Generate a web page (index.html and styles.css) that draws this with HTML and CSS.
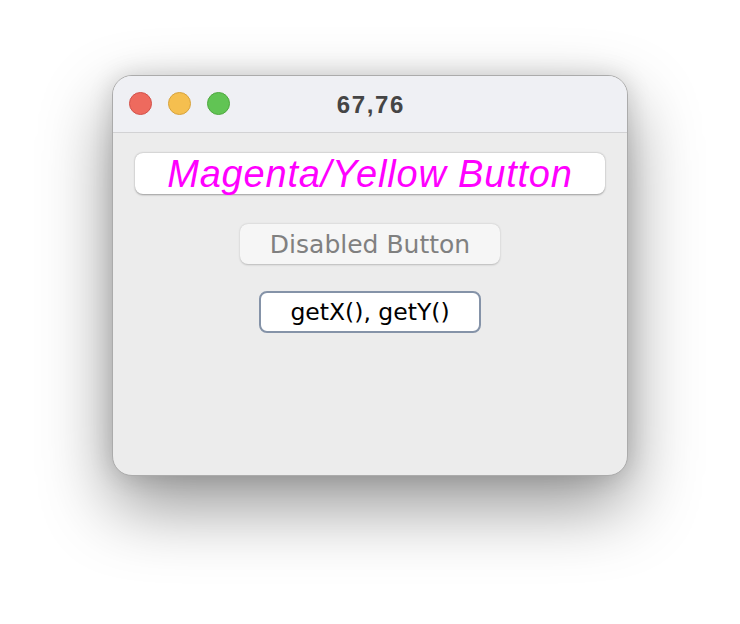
FILE: index.html
```html
<!DOCTYPE html>
<html>
<head>
<meta charset="utf-8">
<link rel="stylesheet" href="styles.css">
</head>
<body>
<div class="window">
  <div class="titlebar">
    <div class="lights">
      <span class="light red"></span>
      <span class="light yellow"></span>
      <span class="light green"></span>
    </div>
    <div class="title">67,76</div>
  </div>
  <div class="content">
    <div class="btn magenta">Magenta/Yellow Button</div>
    <div class="btn disabled">Disabled Button</div>
    <div class="btn focused">getX(), getY()</div>
  </div>
</div>
</body>
</html>
```
FILE: styles.css
```css
html, body {
  margin: 0;
  padding: 0;
  background: #ffffff;
}
body {
  width: 740px;
  height: 624px;
  overflow: hidden;
}
.window {
  margin: 75px 0 0 112px;
  width: 516px;
  height: 401px;
  box-sizing: border-box;
  border-radius: 20px;
  background: #ececec;
  border: 1px solid #ababab;
  box-shadow: 0 30px 70px rgba(0,0,0,0.42), 0 0 24px rgba(0,0,0,0.14);
  overflow: hidden;
  display: flex;
  flex-direction: column;
}
.titlebar {
  position: relative;
  height: 56px;
  flex: none;
  background: #eff0f4;
  border-bottom: 1px solid #d2d2d4;
  display: flex;
  align-items: center;
  justify-content: center;
}
.lights {
  position: absolute;
  left: 16px;
  top: 16px;
  display: flex;
  gap: 16px;
}
.light {
  width: 23px;
  height: 23px;
  border-radius: 50%;
  box-sizing: border-box;
}
.red { background: #ee6a5e; border: 1px solid #d2514a; }
.yellow { background: #f5bf4f; border: 1px solid #d6a23c; }
.green { background: #61c454; border: 1px solid #4fa83f; }
.title {
  font-family: "Liberation Sans", Arial, sans-serif;
  font-weight: bold;
  font-size: 24px;
  letter-spacing: 1.6px;
  padding-left: 1.6px;
  color: #454545;
  margin-top: 1px;
}
.content {
  display: flex;
  flex-direction: column;
  align-items: center;
  padding-top: 20px;
}
.btn {
  box-sizing: border-box;
  display: flex;
  align-items: center;
  justify-content: center;
  border-radius: 8px;
}
.magenta {
  width: 470px;
  height: 41px;
  background: #ffffff;
  box-shadow: 0 0.5px 2px rgba(0,0,0,0.35);
  font-family: "Liberation Sans", Arial, sans-serif;
  font-style: italic;
  font-size: 38px;
  letter-spacing: 0.8px;
  color: #ff00ff;
  padding-top: 1px;
}
.disabled {
  margin-top: 30px;
  width: 260px;
  height: 40px;
  background: #f6f6f6;
  box-shadow: 0 0.5px 2px rgba(0,0,0,0.22);
  font-family: "DejaVu Sans", Verdana, sans-serif;
  font-size: 25px;
  color: #808080;
}
.focused {
  margin-top: 27px;
  width: 222px;
  height: 42px;
  background: #ffffff;
  border: 2.5px solid #8593a8;
  font-family: "DejaVu Sans", Verdana, sans-serif;
  font-size: 23.5px;
  color: #000000;
}
```
